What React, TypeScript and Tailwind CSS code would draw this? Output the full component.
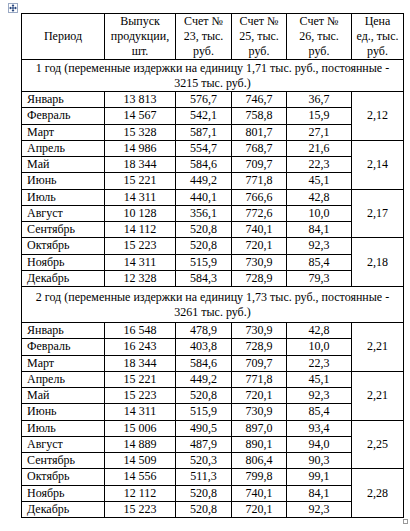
import React from "react";

type Row = [string, string, string, string, string];

const year1: Row[][] = [
  [
    ["Январь", "13 813", "576,7", "746,7", "36,7"],
    ["Февраль", "14 567", "542,1", "758,8", "15,9"],
    ["Март", "15 328", "587,1", "801,7", "27,1"],
  ],
  [
    ["Апрель", "14 986", "554,7", "768,7", "21,6"],
    ["Май", "18 344", "584,6", "709,7", "22,3"],
    ["Июнь", "15 221", "449,2", "771,8", "45,1"],
  ],
  [
    ["Июль", "14 311", "440,1", "766,6", "42,8"],
    ["Август", "10 128", "356,1", "772,6", "10,0"],
    ["Сентябрь", "14 112", "520,8", "740,1", "84,1"],
  ],
  [
    ["Октябрь", "15 223", "520,8", "720,1", "92,3"],
    ["Ноябрь", "14 311", "515,9", "730,9", "85,4"],
    ["Декабрь", "12 328", "584,3", "728,9", "79,3"],
  ],
];
const prices1 = ["2,12", "2,14", "2,17", "2,18"];

const year2: Row[][] = [
  [
    ["Январь", "16 548", "478,9", "730,9", "42,8"],
    ["Февраль", "16 243", "403,8", "728,9", "10,0"],
    ["Март", "18 344", "584,6", "709,7", "22,3"],
  ],
  [
    ["Апрель", "15 221", "449,2", "771,8", "45,1"],
    ["Май", "15 223", "520,8", "720,1", "92,3"],
    ["Июнь", "14 311", "515,9", "730,9", "85,4"],
  ],
  [
    ["Июль", "15 006", "490,5", "897,0", "93,4"],
    ["Август", "14 889", "487,9", "890,1", "94,0"],
    ["Сентябрь", "14 509", "520,3", "806,4", "90,3"],
  ],
  [
    ["Октябрь", "14 556", "511,3", "799,8", "99,1"],
    ["Ноябрь", "12 112", "520,8", "740,1", "84,1"],
    ["Декабрь", "15 223", "520,8", "720,1", "92,3"],
  ],
];
const prices2 = ["2,21", "2,21", "2,25", "2,28"];

function MoveHandle() {
  return (
    <svg width="10" height="10" viewBox="0 0 10 10" className="block ml-[8px]">
      <rect x="0.5" y="0.5" width="9" height="9" fill="#fff" stroke="#9aa9c4" />
      <path d="M5 1.5v7M1.5 5h7" stroke="#1f3f7a" strokeWidth="1" />
      <path d="M5 1.5l-1.5 1.5h3zM5 8.5l-1.5-1.5h3zM1.5 5l1.5-1.5v3zM8.5 5l-1.5-1.5v3z" fill="#1f3f7a" />
    </svg>
  );
}

function Quarter({ rows, price }: { rows: Row[]; price: string }) {
  return (
    <>
      {rows.map((r, i) => (
        <tr key={r[0]} className="h-[16.25px]">
          <td className="border border-black pl-[5px] text-left">{r[0]}</td>
          <td className="border border-black text-center">{r[1]}</td>
          <td className="border border-black text-center">{r[2]}</td>
          <td className="border border-black text-center">{r[3]}</td>
          <td className="border border-black text-center">{r[4]}</td>
          {i === 0 && (
            <td rowSpan={3} className="border border-black text-center align-middle">
              {price}
            </td>
          )}
        </tr>
      ))}
    </>
  );
}

export default function App() {
  return (
    <div className="w-[410px] h-[531px] bg-white pt-[3px] text-black font-[family-name:Liberation_Serif,Times_New_Roman,serif] text-[12px] leading-[15px]">
      <MoveHandle />

      <table className="ml-[21px] w-[383px] table-fixed border-collapse">
        <colgroup>
          <col className="w-[83px]" />
          <col className="w-[71px]" />
          <col className="w-[56px]" />
          <col className="w-[55px]" />
          <col className="w-[65px]" />
          <col className="w-[52px]" />
        </colgroup>
        <tbody>
          {/* Header */}
          <tr className="h-[46px]">
            <td className="border border-black text-center">Период</td>
            <td className="border border-black text-center">
              Выпуск
              <br />
              продукции,
              <br />
              шт.
            </td>
            <td className="border border-black text-center">
              Счет №
              <br />
              23, тыс.
              <br />
              руб.
            </td>
            <td className="border border-black text-center">
              Счет №
              <br />
              25, тыс.
              <br />
              руб.
            </td>
            <td className="border border-black text-center">
              Счет №
              <br />
              26, тыс.
              <br />
              руб.
            </td>
            <td className="border border-black text-center">
              Цена
              <br />
              ед., тыс.
              <br />
              руб.
            </td>
          </tr>

          {/* Year 1 */}
          <tr className="h-[32px]">
            <td colSpan={6} className="border border-black text-center">
              1 год (переменные издержки на единицу 1,71 тыс. руб., постоянные -
              <br />
              3215 тыс. руб.)
            </td>
          </tr>
          {year1.map((q, i) => (
            <Quarter key={i} rows={q} price={prices1[i]} />
          ))}

          {/* Year 2 */}
          <tr className="h-[36px]">
            <td colSpan={6} className="border border-black text-center align-top pt-[3px]">
              2 год (переменные издержки на единицу 1,73 тыс. руб., постоянные -
              <br />
              3261 тыс. руб.)
            </td>
          </tr>
          {year2.map((q, i) => (
            <Quarter key={i} rows={q} price={prices2[i]} />
          ))}
        </tbody>
      </table>

      {/* resize handle */}
      <div className="ml-[403px] mt-[1px] w-[5px] h-[5px] border border-[#9a9a9a]" />
    </div>
  );
}
